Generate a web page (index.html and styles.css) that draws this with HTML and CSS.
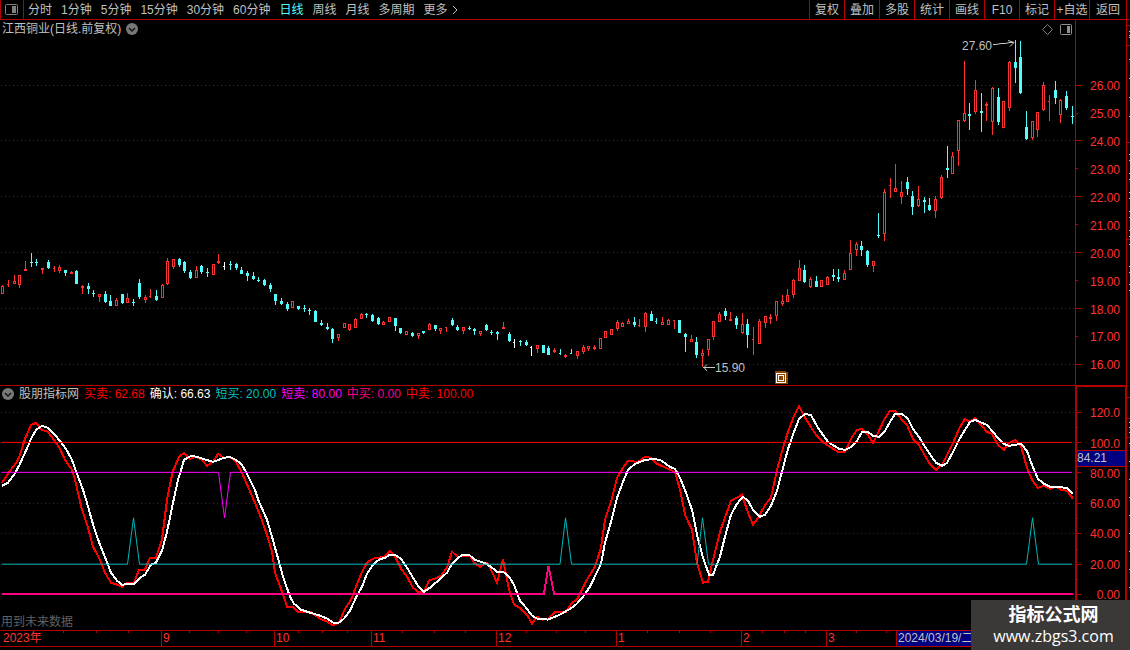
FILE: index.html
```html
<!DOCTYPE html>
<html lang="zh-CN">
<head>
    <meta charset="UTF-8">
    <meta name="viewport" content="width=device-width, initial-scale=1.0">
    <title>江西铜业 日线</title>
    <link rel="stylesheet" href="styles.css">
</head>
<body>
    <header class="toolbar">
        <button class="layout-btn" type="button" aria-label="布局">
            <svg width="13" height="11" viewBox="0 0 13 11"><rect x="0.5" y="0.5" width="12" height="10" rx="1" fill="none" stroke="#808080"/><rect x="7" y="2" width="4" height="7" fill="#808080"/></svg>
        </button>
        <nav class="periods">
            <button type="button">分时</button>
            <button type="button">1分钟</button>
            <button type="button">5分钟</button>
            <button type="button">15分钟</button>
            <button type="button">30分钟</button>
            <button type="button">60分钟</button>
            <button type="button" class="active">日线</button>
            <button type="button">周线</button>
            <button type="button">月线</button>
            <button type="button">多周期</button>
            <button type="button" class="more">更多
                <svg width="6" height="10" viewBox="0 0 6 10"><path d="M1 1 L5 5 L1 9" fill="none" stroke="#c0c0c0"/></svg>
            </button>
        </nav>
        <div class="tools">
            <button type="button">复权</button>
            <button type="button">叠加</button>
            <button type="button">多股</button>
            <button type="button">统计</button>
            <button type="button">画线</button>
            <button type="button">F10</button>
            <button type="button">标记</button>
            <button type="button">+自选</button>
            <button type="button">返回</button>
        </div>
    </header>

    <main class="workspace">
        <div class="panes">
            <section class="pane price">
                <div class="plot">
                    <svg id="price-chart" viewBox="0 20 1075 365" preserveAspectRatio="none"></svg>
                    <div class="pane-head">
                        <h1>江西铜业(日线.前复权)</h1>
                        <button type="button" class="round" aria-label="展开">
                            <svg width="12" height="12" viewBox="0 0 12 12"><circle cx="6" cy="6" r="6" fill="#787878"/><path d="M3 5 L6 8 L9 5" fill="none" stroke="#111" stroke-width="1.4"/></svg>
                        </button>
                        <span class="pane-icons">
                            <svg width="11" height="11" viewBox="0 0 11 11"><path d="M5.5 0.5 L10.5 5.5 L5.5 10.5 L0.5 5.5 Z" fill="none" stroke="#808080"/></svg>
                            <svg width="12" height="11" viewBox="0 0 12 11"><rect x="0.5" y="0.5" width="11" height="10" rx="1" fill="none" stroke="#909090"/><rect x="7" y="2" width="3" height="7" fill="#909090"/></svg>
                        </span>
                    </div>
                    <span class="note high">27.60
                        <svg width="22" height="8" viewBox="0 0 22 8"><path d="M0 4.5 H3 L8 3.5 H12 L17 2.5 H21 M15 0.5 L21 2.5 L17 6.5" fill="none" stroke="#c8c8c8"/></svg>
                    </span>
                    <span class="note low">
                        <svg width="12" height="8" viewBox="0 0 12 8"><path d="M0 3.5 H12 M4 0.5 L1 3.5 L4 7" fill="none" stroke="#c8c8c8"/></svg>15.90
                    </span>
                    <svg class="marker" width="13" height="13" viewBox="0 0 13 13" shape-rendering="crispEdges"><path d="M0 0 H11 V1 H13 V13 H0 Z" fill="#8a4600"/><path d="M1.5 2.5 H10.5 V11.5 H1.5 Z M3.5 4.5 H8.5 V9.5 H3.5 Z" fill="none" stroke="#fff"/></svg>
                </div>
                <div class="axis">
                    <svg id="price-ticks" viewBox="0 20 6 365" preserveAspectRatio="none"></svg>
                    <ol>
                        <li>26.00</li>
                        <li>25.00</li>
                        <li>24.00</li>
                        <li>23.00</li>
                        <li>22.00</li>
                        <li>21.00</li>
                        <li>20.00</li>
                        <li>19.00</li>
                        <li>18.00</li>
                        <li>17.00</li>
                        <li>16.00</li>
                    </ol>
                </div>
            </section>

            <section class="pane indicator">
                <div class="plot">
                    <svg id="indicator-chart" viewBox="0 386 1075 244" preserveAspectRatio="none"></svg>
                    <div class="legend">
                        <button type="button" class="round" aria-label="展开">
                            <svg width="12" height="12" viewBox="0 0 12 12"><circle cx="6" cy="6" r="6" fill="#787878"/><path d="M3 5 L6 8 L9 5" fill="none" stroke="#111" stroke-width="1.4"/></svg>
                        </button>
                        <span>股朋指标网</span>
                        <span class="red">买卖: 62.68</span>
                        <span class="white">确认: 66.63</span>
                        <span class="teal">短买: 20.00</span>
                        <span class="magenta">短卖: 80.00</span>
                        <span class="pink">中买: 0.00</span>
                        <span class="red">中卖: 100.00</span>
                    </div>
                    <p class="warning">用到未来数据</p>
                </div>
                <div class="axis">
                    <svg id="indicator-ticks" viewBox="0 387 6 243" preserveAspectRatio="none"></svg>
                    <ol>
                        <li>120.0</li>
                        <li>100.0</li>
                        <li>80.00</li>
                        <li>60.00</li>
                        <li>40.00</li>
                        <li>20.00</li>
                        <li>0.00</li>
                    </ol>
                    <span class="current">84.21</span>
                </div>
            </section>

            <div class="dates">
                <svg id="date-ticks" viewBox="0 0 1127 15" preserveAspectRatio="none"></svg>
                <ol>
                    <li>2023年</li>
                    <li>9</li>
                    <li>10</li>
                    <li>11</li>
                    <li>12</li>
                    <li>1</li>
                    <li>2</li>
                    <li>3</li>
                    <li class="selected">2024/03/19/二</li>
                </ol>
            </div>
        </div>
        <svg id="side-strip" class="side-strip" viewBox="0 20 3 627" preserveAspectRatio="none"></svg>
    </main>
    <svg id="bottom-strip" class="bottom-strip" viewBox="0 647 1130 3" preserveAspectRatio="none"></svg>

    <div class="watermark">
        <strong>指标公式网</strong>
        <a href="#">www.zbgs3.com</a>
    </div>

    <script src="chart.js"></script>
</body>
</html>
```
FILE: styles.css
```css
* {
    box-sizing: border-box;
}
body {
    margin: 0;
    height: 100vh;
    display: flex;
    flex-direction: column;
    overflow: hidden;
    background-color: #000;
    color: #c0c0c0;
    font-family: "Liberation Sans", "Noto Sans CJK SC", sans-serif;
    font-size: 12px;
    line-height: 14px;
}
button {
    padding: 0;
    border: none;
    background: none;
    color: inherit;
    font: inherit;
    white-space: nowrap;
    cursor: pointer;
}
svg {
    display: block;
}
ol {
    margin: 0;
    padding: 0;
    list-style: none;
}

/* top bar */
.toolbar {
    flex: none;
    display: flex;
    height: 20px;
    border-bottom: 1px solid #b40000;
}
.layout-btn {
    display: flex;
    align-items: center;
    justify-content: center;
    width: 24px;
    padding-right: 1px;
    border-left: 1px solid #b40000;
    border-right: 1px solid #b40000;
}
.periods {
    flex: 1;
    display: flex;
    gap: 9px;
    padding-left: 4px;
}
.periods .active {
    color: #54fcfc;
}
.more {
    display: flex;
    align-items: center;
    gap: 4px;
}
.tools {
    display: flex;
    padding-right: 3px;
}
.tools button {
    width: 35px;
    border-left: 1px solid #b40000;
}
.tools button:last-child {
    width: 38px;
    border-right: 1px solid #b40000;
}

/* charts */
.workspace {
    flex: 1;
    min-height: 0;
    display: flex;
}
.panes {
    flex: 1;
    display: flex;
    flex-direction: column;
}
.pane {
    display: flex;
    min-height: 0;
}
.price {
    flex: 366 1 0;
    border-bottom: 1px solid #b40000;
}
.indicator {
    flex: 244 1 0;
}
.plot {
    position: relative;
    flex: 1;
    min-width: 0;
}
.plot > svg:first-child {
    width: 100%;
    height: 100%;
    shape-rendering: crispEdges;
}
.axis {
    position: relative;
    display: flex;
    width: 52px;
    border-left: 1px solid #b40000;
    border-right: 1px solid #b40000;
    color: #ff3232;
}
.axis svg {
    width: 6px;
    height: 100%;
    shape-rendering: crispEdges;
}
.axis ol {
    flex: 1;
    display: flex;
    flex-direction: column;
    justify-content: space-between;
    padding: 59px 6px 13px 0;
    text-align: right;
}
.indicator .axis {
    border-width: 1px 2px 0;
    border-style: solid;
    border-color: #b40000;
}
.indicator .axis ol {
    padding: 19px 5px 28px 0;
}
.current {
    position: absolute;
    top: 63px;
    left: 0;
    right: 0;
    height: 17px;
    line-height: 15px;
    border: solid #b40000;
    border-width: 1px 0;
    background-color: #000080;
    color: #c0c0c0;
}

/* things over the plots */
.pane-head {
    position: absolute;
    top: 2px;
    left: 2px;
    right: 3px;
    display: flex;
    align-items: center;
    gap: 5px;
}
.pane-head h1 {
    margin: 0;
    font-size: 12px;
    font-weight: normal;
}
.pane-icons {
    display: flex;
    gap: 7px;
    margin-left: auto;
}
.note {
    position: absolute;
    display: flex;
    align-items: center;
}
.high {
    top: 19px;
    right: 60px;
    gap: 1px;
}
.high svg {
    margin-bottom: 5px;
}
.low {
    top: 341px;
    left: 703px;
}
.marker {
    position: absolute;
    top: 351px;
    left: 775px;
}
.legend {
    position: absolute;
    top: 1px;
    left: 2px;
    display: flex;
    align-items: center;
    gap: 5px;
    white-space: nowrap;
}
.warning {
    position: absolute;
    left: 1px;
    bottom: 1px;
    margin: 0;
    color: #606060;
}
.red {
    color: #ff0000;
}
.white {
    color: #ffffff;
}
.teal {
    color: #00c0c0;
}
.magenta {
    color: #ff00ff;
}
.pink {
    color: #ff0080;
}

/* date axis */
.dates {
    position: relative;
    height: 17px;
    border-top: 1px solid #b40000;
    border-bottom: 1px solid #b40000;
    color: #ff3232;
}
.dates svg {
    position: absolute;
    width: 100%;
    height: 15px;
    shape-rendering: crispEdges;
}
.dates ol {
    display: grid;
    grid-template-columns: 161fr 113fr 97fr 125fr 120fr 125fr 85fr 70fr 231fr;
    line-height: 15px;
}
.dates li {
    border-left: 1px solid #b40000;
    padding-left: 1px;
    white-space: nowrap;
}
.dates li:first-child {
    border-left: none;
    padding-left: 3px;
}
.dates .selected {
    background-color: #000080;
    color: #c0c0c0;
}
.side-strip {
    width: 3px;
    height: 100%;
    shape-rendering: crispEdges;
}
.bottom-strip {
    flex: none;
    width: 100%;
    height: 3px;
    shape-rendering: crispEdges;
}

.watermark {
    position: absolute;
    right: 0;
    bottom: 0;
    display: flex;
    flex-direction: column;
    align-items: center;
    width: 159px;
    height: 50px;
    padding: 5px 0 0 6px;
    background-color: #3b3838;
    color: #fff;
}
.watermark strong {
    font-size: 18px;
    line-height: 21px;
}
.watermark a {
    color: #fff;
    font-family: "Open Sans", sans-serif;
    font-size: 16px;
    line-height: 20px;
    text-decoration: none;
}
```
FILE: chart.js
```js
const NS = 'http://www.w3.org/2000/svg';

// kind, x, high, low, body top, body bottom
// r = up, c = down, w = flat; upper case = open tick on the left only
const candles = `
r 2 285 294 286 294|R 8 280 287 284 285|r 14 275 284 281 284|r 19 275 288 275 285|r 25 261 271 269 271
c 31 253 267 262 263|c 36 259 266 262 263|r 42 268 274 268 270|c 48 260 269 262 268|R 54 266 272 268 269
r 59 265 273 267 271|c 65 270 276 270 273|r 71 271 274 272 274|c 76 270 284 271 284|r 82 285 294 286 288
c 88 283 294 286 289|c 93 290 297 293 294|r 99 294 302 294 297|c 105 291 303 294 302|c 110 295 306 301 306
r 116 298 306 300 306|c 122 294 304 294 303|r 127 293 303 298 303|c 133 299 306 302 303|c 139 279 299 283 297
r 145 295 303 297 300|R 150 289 298 296 297|c 156 290 301 296 300|r 162 284 298 285 298|r 167 258 285 261 284
r 173 259 269 259 267|c 179 258 267 259 265|c 184 261 273 262 271|c 190 270 279 272 278|r 196 266 278 270 278
c 201 265 274 266 272|c 207 268 277 272 273|r 213 264 275 264 275|r 218 254 264 261 263|W 224 262 270 266 267
c 230 261 270 264 265|c 236 263 270 264 268|c 241 267 274 270 274|c 247 271 281 273 276|c 253 272 280 276 279
c 258 277 282 280 281|c 264 279 286 280 285|c 270 283 292 285 289|c 275 294 305 294 301|c 281 298 305 301 304
c 287 302 311 304 309|r 292 301 308 301 308|c 298 306 310 306 309|c 304 305 312 308 309|c 309 308 315 310 311
c 315 310 322 311 322|c 321 320 326 323 325|c 327 323 330 327 329|c 332 328 343 329 339|r 338 334 341 334 338
r 344 323 328 323 328|r 349 324 331 324 330|r 355 318 328 319 328|r 361 313 319 314 319|c 366 313 318 314 315
c 372 314 322 315 321|c 378 317 325 318 324|r 383 321 325 322 325|r 389 317 322 317 322|c 395 318 331 318 326
c 400 328 334 328 333|r 406 331 335 331 335|c 412 332 337 333 336|r 418 333 339 333 336|c 423 331 334 331 333
r 429 323 330 324 330|c 435 325 331 325 329|r 440 328 334 328 331|R 446 327 332 327 328|c 452 318 326 320 325
c 457 325 331 327 330|r 463 327 334 327 331|c 469 326 330 328 329|c 474 328 335 329 331|r 480 331 336 331 334
c 486 324 331 325 330|c 491 330 335 332 333|c 497 331 340 332 334|r 503 322 329 327 329|c 509 332 342 334 341
W 514 339 348 342 343|c 520 340 346 341 342|c 526 340 346 342 345|W 531 346 356 347 348|r 537 345 353 345 349
c 543 345 353 345 353|c 548 346 355 348 355|r 554 348 353 350 352|C 560 349 355 353 354|r 565 354 358 355 357
C 571 349 354 353 354|r 577 351 359 351 356|r 583 345 354 347 352|r 588 346 351 346 349|r 594 345 350 347 349
r 600 338 349 338 349|r 605 331 338 331 338|r 611 329 335 329 335|r 617 320 331 322 329|r 622 322 327 323 327
r 628 319 324 321 324|c 634 317 327 322 325|R 639 319 327 325 326|r 645 312 332 313 327|c 651 311 321 314 321
C 656 318 324 321 322|r 662 317 325 322 325|r 668 319 325 320 325|R 674 320 329 320 321|c 679 320 333 320 333
c 685 333 352 334 337|r 691 335 342 339 342|c 696 337 358 342 355|r 702 349 367 353 356|r 708 339 356 339 350
r 713 321 340 321 337|r 719 312 322 314 322|c 725 308 320 311 316|r 730 312 321 319 321|c 736 316 329 318 325
r 742 313 334 324 333|c 747 319 348 324 335|R 753 327 355 339 340|r 759 319 344 321 344|r 765 316 328 316 323
r 770 314 324 317 319|r 776 301 321 301 316|r 782 295 306 301 304|r 787 289 302 295 302|r 793 279 298 280 295
r 799 260 281 268 281|c 804 265 283 270 282|r 810 277 288 279 287|c 816 276 287 281 287|r 821 280 287 280 287
r 827 276 285 277 285|c 833 269 281 275 277|c 838 269 282 277 279|r 844 270 280 273 280|r 850 240 270 253 270
r 856 242 256 244 250|c 861 241 256 246 250|c 867 250 267 251 265|r 873 261 272 261 266|c 878 213 238 235 236
r 884 189 241 192 234|R 890 178 198 185 186|r 895 164 192 188 192|r 901 181 204 192 197|c 907 177 195 182 189
c 912 191 215 196 207|r 918 186 207 199 206|c 924 197 213 200 202|c 929 198 211 205 210|r 935 196 218 199 211
r 941 175 199 177 198|c 947 146 178 168 170|r 952 152 174 156 174|r 958 120 166 120 151|r 964 61 122 113 121
c 969 103 130 114 116|r 975 80 114 90 112|c 981 93 132 111 113|r 986 102 121 104 106|r 992 87 135 88 122
c 998 88 125 97 122|r 1003 101 128 101 128|r 1009 61 111 62 108|c 1015 40 83 62 68|c 1020 41 94 57 93
c 1026 111 140 127 139|r 1032 121 140 121 138|r 1037 112 137 112 130|r 1043 82 111 85 110|R 1049 95 121 101 102
c 1055 81 104 90 98|r 1060 99 123 100 115|c 1066 91 110 96 108|c 1072 106 124 116 117`;

const fast = '2,483 8,474 14,466 19,458 25,439 31,425 36,423 42,430 48,432 54,440 59,447 65,460 72,470 75,480 82,510 88,528 93,547 100,560 105,573 111,583 117,585 122,587 127,583 134,583 139,570 145,570 150,558 156,558 162,540 167,500 171,480 173,471 179,457 184,453 190,459 196,457 202,460 207,466 213,462 218,454 224,458 230,457 236,462 242,473 245,480 255,503 261,518 267,535 272,552 275,573 282,592 287,607 293,607 298,612 310,612 320,619 327,622 333,626 339,623 345,609 351,600 356,587 362,572 367,563 373,559 384,557 390,551 395,557 401,569 407,577 413,588 418,592 424,592 429,581 437,578 441,576 447,568 452,552 458,557 470,556 474,563 480,567 487,563 492,572 497,583 503,560 509,590 514,605 521,609 527,615 532,624 537,617 542,620 548,619 555,612 566,612 572,603 577,600 587,580 595,567 601,548 605,520 611,502 617,478 623,468 628,461 638,462 645,457 651,458 657,464 668,469 675,472 680,490 685,515 692,530 697,563 703,583 708,582 713,560 720,532 731,501 742,495 748,513 753,525 759,517 765,505 771,498 777,470 783,448 788,432 794,416 799,406 804,416 816,435 824,443 838,452 845,452 851,439 857,430 862,429 867,434 873,443 878,433 884,420 890,411 895,411 902,420 907,425 913,439 919,445 929,463 936,470 942,465 947,455 953,443 959,429 965,419 970,422 975,418 981,425 987,432 992,434 998,445 1004,450 1009,443 1015,440 1021,446 1027,468 1032,480 1038,488 1044,486 1050,489 1056,487 1061,490 1067,491 1073,499';

const slow = '2,486 8,483 14,475 19,466 25,453 31,439 36,430 42,426 48,428 54,434 60,441 66,449 72,460 77,474 83,490 87,503 94,528 100,545 106,560 111,573 117,581 122,585 134,584 140,578 145,575 151,565 156,563 162,551 167,532 173,503 178,480 180,474 184,460 191,456 197,457 203,459 213,462 224,458 230,457 236,460 242,465 247,474 255,490 259,502 267,520 272,537 277,555 283,577 290,597 294,604 301,610 310,613 320,616 327,619 333,623 339,623 344,619 350,611 356,598 362,587 367,574 373,565 379,560 385,558 390,555 395,555 401,559 407,568 413,578 418,586 424,592 430,588 437,582 447,573 452,564 458,558 463,555 469,555 475,560 486,564 492,568 497,572 503,572 509,577 514,585 520,601 526,608 532,616 537,619 548,620 560,615 572,608 577,604 583,597 590,587 601,564 605,543 611,522 617,498 623,482 628,470 635,464 645,460 655,459 662,461 670,467 675,469 680,478 686,493 692,510 697,535 703,558 709,575 713,575 720,557 725,537 731,515 737,504 743,497 748,501 753,510 760,517 765,515 771,506 777,491 783,468 788,449 794,432 799,419 805,414 811,415 818,428 828,442 839,449 845,450 851,447 857,441 862,432 868,432 873,436 879,437 885,431 890,422 895,414 902,414 908,419 913,429 919,437 927,450 936,463 942,466 947,463 953,452 959,440 965,430 970,422 975,420 987,425 998,438 1004,444 1009,446 1021,444 1027,451 1032,465 1038,479 1044,484 1050,487 1056,487 1067,488 1073,494';

function add(svg, tag, attrs) {
    const el = document.createElementNS(NS, tag);
    for (const key in attrs) el.setAttribute(key, attrs[key]);
    svg.appendChild(el);
}

function rect(svg, x, y, width, height, fill) {
    add(svg, 'rect', { x, y, width, height, fill });
}

function line(svg, points, stroke, width) {
    add(svg, 'polyline', { points, fill: 'none', stroke, 'stroke-width': width });
}

function grid(svg, rows) {
    rows.forEach(y => add(svg, 'line', {
        x1: 1, x2: 1075, y1: y + 0.5, y2: y + 0.5, stroke: '#a00000', 'stroke-dasharray': '1 3'
    }));
}

// price pane
const price = document.getElementById('price-chart');
const colors = { r: '#ff3232', c: '#54fcfc', w: '#ffffff' };
grid(price, [85, 140, 196, 252, 308, 364]);
candles.trim().split(/[|\n]/).forEach(row => {
    const [kind, ...nums] = row.split(' ');
    const [x, high, low, top, bottom] = nums.map(Number);
    const color = colors[kind.toLowerCase()];
    rect(price, x, high, 1, low - high, color);
    rect(price, x - 1, top, kind === kind.toUpperCase() ? 2 : 3, bottom - top, color);
    if (kind === 'r' && bottom - top > 2) {
        rect(price, x, top + 1, 1, bottom - top - 2, '#000');
    }
});

// indicator pane
const indicator = document.getElementById('indicator-chart');
grid(indicator, [412, 442, 472, 503, 533, 564, 594]);
line(indicator, fast, '#ff0000', 2);
line(indicator, slow, '#ffffff', 2);
line(indicator, '2,564.5 127.5,564.5 133.5,518 139.5,564.5 560,564.5 565.5,518 571.5,564.5 697,564.5 702.5,518 708.5,564.5 1026.5,564.5 1032.5,518 1038.5,564.5 1072,564.5', '#00b8b8', 1);
line(indicator, '2,472.5 218.5,472.5 224.5,518 230.5,472.5 1072,472.5', '#ff00ff', 1);
line(indicator, '2,594 544,594 548.5,566 554,594 1073,594', '#ff0080', 2);
line(indicator, '2,442.5 1072,442.5', '#ff0000', 1);

// axis ticks
const priceTicks = document.getElementById('price-ticks');
[85, 113, 140, 168, 196, 224, 252, 280, 308, 336, 364].forEach((y, i) => rect(priceTicks, 0, y, i % 2 ? 2 : 5, 1, '#b40000'));
const indicatorTicks = document.getElementById('indicator-ticks');
[412, 427, 442, 457, 472, 488, 503, 518, 533, 549, 564, 579, 594].forEach((y, i) => rect(indicatorTicks, 0, y, i % 2 ? 1 : 4, 1, '#b40000'));
const dateTicks = document.getElementById('date-ticks');
[63, 96, 128, 189, 218, 246, 298, 322, 347, 402, 434, 465, 526, 556, 585, 647, 679, 710, 762, 784, 805, 856, 886].forEach(x => rect(dateTicks, x, 0, 1, 2, '#b40000'));

// edges of the neighbouring panels
const side = document.getElementById('side-strip');
[25, 45, 142, 239, 397, 418, 437].forEach(y => rect(side, 0, y, 3, 1, '#b40000'));
[31, 35, 37, 59, 78, 97, 116, 154, 160, 173, 179, 192, 198, 211, 217, 230, 236, 244, 266, 272, 284, 290, 422, 427, 432, 443, 461, 479, 497, 515, 533, 551, 569, 587].forEach(y => rect(side, 2, y, 1, 1, '#c0c0c0'));
const bottom = document.getElementById('bottom-strip');
[0, 42, 73, 115, 144, 177, 207, 241, 282, 308, 332, 364, 390, 422, 480, 508, 599, 628, 663, 696, 735, 766, 807, 839, 871].forEach(x => rect(bottom, x, 0, 1, 3, '#b40000'));
[7, 10, 13, 16, 20, 23, 51].forEach(x => rect(bottom, x, 2, 2, 1, '#c0c0c0'));
[828, 845, 849, 857].forEach(x => rect(bottom, x, 2, x > 855 ? 9 : 2, 1, '#54fcfc'));
```
